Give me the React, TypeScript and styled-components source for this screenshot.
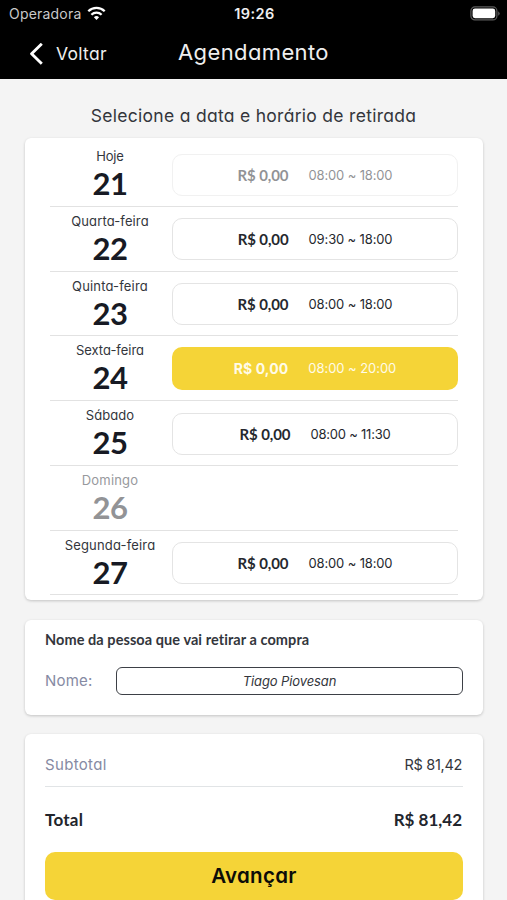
import React from "react";
import styled, { createGlobalStyle } from "styled-components";

const GlobalStyle = createGlobalStyle`
  *, *::before, *::after { box-sizing: border-box; }
  body {
    margin: 0;
    background: #f4f4f4;
    font-family: Inter, sans-serif;
    font-feature-settings: "cv11" 1;
    color: #33363c;
  }
`;

const Screen = styled.main`
  width: 507px;
  height: 900px;
  overflow: hidden;
  display: flex;
  flex-direction: column;
  background: #f4f4f4;
`;

const TopBar = styled.header`
  flex: none;
  height: 79px;
  background: #000;
  color: #efefef;
`;

const StatusBar = styled.div`
  display: grid;
  grid-template-columns: 1fr auto 1fr;
  align-items: center;
  height: 27px;
  padding: 0 7px 0 9px;
`;

const Carrier = styled.div`
  display: flex;
  align-items: center;
  gap: 6px;
  font-size: 14px;
  letter-spacing: 0.2px;
  color: #c9c9c9;
  font-feature-settings: "cv11" 0;
`;

const Clock = styled.div`
  font-size: 14.5px;
  font-weight: 600;
  letter-spacing: 0.4px;
`;

const BatteryIcon = styled.svg`
  justify-self: end;
`;

const NavBar = styled.nav`
  display: grid;
  grid-template-columns: 1fr auto 1fr;
  align-items: center;
  height: 52px;
  padding: 0 28px;
`;

const BackButton = styled.button`
  display: flex;
  align-items: center;
  gap: 12px;
  padding: 1px 0 0;
  border: 0;
  background: none;
  color: inherit;
  font: inherit;
  font-feature-settings: "cv11" 1;
  font-size: 17.5px;
  letter-spacing: 0.3px;
`;

const Title = styled.h1`
  margin: 0;
  padding-bottom: 3px;
  font-size: 22px;
  font-weight: 400;
  letter-spacing: 0.38px;
`;

const Heading = styled.h2`
  flex: none;
  margin: 0;
  padding-top: 15px;
  height: 59px;
  line-height: 43px;
  text-align: center;
  font-size: 17.5px;
  font-weight: 400;
  letter-spacing: 0.29px;
`;

const Card = styled.section`
  flex: none;
  margin: 0 24px 0 25px;
  border-radius: 6px;
  background: #fff;
  box-shadow: 0 1px 3px rgba(0, 0, 0, 0.2);
`;

const ScheduleCard = styled(Card)`
  height: 462px;
  padding: 4px 25px 0;
`;

const DayRow = styled.div`
  display: grid;
  grid-template-columns: 120px 286px;
  column-gap: 2px;
  height: 64.75px;
  border-bottom: 1px solid #e2e2e2;
`;

const DayLabel = styled.div<{ $muted?: boolean }>`
  display: flex;
  flex-direction: column;
  align-items: center;
  padding-top: 5px;
  color: ${(p) => (p.$muted ? "#97999d" : "#33363c")};
`;

const Weekday = styled.span<{ $tracking: number }>`
  font-size: 13px;
  line-height: 18px;
  letter-spacing: ${(p) => p.$tracking}px;
`;

const DayNumber = styled.span<{ $muted?: boolean }>`
  font-family: Lato, sans-serif;
  font-size: 31px;
  font-weight: 700;
  line-height: 36px;
  letter-spacing: -0.5px;
  color: ${(p) => (p.$muted ? "#929396" : "#171a24")};
`;

const Slot = styled.button<{ $state: "normal" | "disabled" | "selected" }>`
  display: flex;
  align-items: center;
  justify-content: center;
  gap: 20px;
  width: 286px;
  height: ${(p) => (p.$state === "selected" ? 43 : 42)}px;
  margin: ${(p) => (p.$state === "selected" ? 10.7 : 11.7)}px 0 0;
  padding: 0;
  border: ${(p) => (p.$state === "selected" ? "0" : "1px solid #e4e4e4")};
  border-radius: 10px;
  background: ${(p) => (p.$state === "selected" ? "#f5d437" : "#fff")};
  color: ${(p) => (p.$state === "selected" ? "#fffbe8" : "#25282e")};
  opacity: ${(p) => (p.$state === "disabled" ? 0.5 : 1)};
  font: inherit;
  font-feature-settings: "cv11" 1;
`;

const Price = styled.span<{ $selected: boolean }>`
  font-family: ${(p) => (p.$selected ? "Inter" : "Lato")}, sans-serif;
  font-size: ${(p) => (p.$selected ? 14 : 15)}px;
  font-weight: 700;
  letter-spacing: ${(p) => (p.$selected ? 0.1 : -0.1)}px;
`;

const Hours = styled.span<{ $tracking: number }>`
  font-size: 13px;
  letter-spacing: ${(p) => p.$tracking}px;
`;

const PickupCard = styled(Card)`
  height: 95px;
  margin-top: 20px;
  padding: 9px 20px 0;
`;

const PickupTitle = styled.h3`
  margin: 0;
  font-family: Lato, sans-serif;
  font-size: 14.5px;
  font-weight: 700;
  line-height: 21px;
  letter-spacing: 0.07px;
  font-variant-ligatures: none;
`;

const Field = styled.label`
  display: grid;
  grid-template-columns: 71px 1fr;
  align-items: center;
  height: 28px;
  margin-top: 17px;
`;

const Muted = styled.span<{ $tracking: number }>`
  padding-bottom: 1px;
  font-size: 15px;
  letter-spacing: ${(p) => p.$tracking}px;
  color: #868aa3;
`;

const NameInput = styled.input`
  width: 100%;
  height: 28px;
  padding: 0 0 1px;
  border: 1px solid #3d4046;
  border-radius: 6px;
  background: #fff;
  color: #33363c;
  text-align: center;
  font: italic 400 13px Inter, sans-serif;
  font-feature-settings: "cv11" 1;
  letter-spacing: -0.1px;
`;

const SummaryCard = styled(Card)`
  height: 190px;
  margin-top: 19px;
  padding: 10px 20px 0;
`;

const SummaryRow = styled.div`
  display: flex;
  align-items: center;
  justify-content: space-between;
  height: 43px;
  padding-right: 1px;
  border-bottom: 1px solid #e1e4e6;
`;

const Amount = styled.span`
  padding-bottom: 1px;
  font-size: 14.5px;
  letter-spacing: -0.3px;
`;

const TotalRow = styled.div`
  display: flex;
  align-items: center;
  justify-content: space-between;
  height: 65px;
  padding-right: 1px;
  font-family: Lato, sans-serif;
  font-size: 17px;
  font-weight: 700;
  color: #22252c;
`;

const TotalLabel = styled.span`
  letter-spacing: 0.25px;
`;

const NextButton = styled.button`
  display: block;
  width: 418px;
  height: 48px;
  padding: 0 0 1px;
  border: 0;
  border-radius: 10px;
  background: #f5d437;
  color: #0c0c08;
  font: 600 20.5px Inter, sans-serif;
  font-feature-settings: "cv11" 1;
  letter-spacing: 0.3px;
`;

type Day = {
  name: string;
  tracking: number;
  day: number;
  hours?: string;
  hoursTracking?: number;
  state?: "normal" | "disabled" | "selected";
};

const days: Day[] = [
  { name: "Hoje", tracking: -0.15, day: 21, hours: "08:00 ~ 18:00", state: "disabled" },
  { name: "Quarta-feira", tracking: 0.12, day: 22, hours: "09:30 ~ 18:00" },
  { name: "Quinta-feira", tracking: 0.17, day: 23, hours: "08:00 ~ 18:00" },
  { name: "Sexta-feira", tracking: -0.02, day: 24, hours: "08:00 ~ 20:00", hoursTracking: -0.05, state: "selected" },
  { name: "Sábado", tracking: 0.05, day: 25, hours: "08:00 ~ 11:30", hoursTracking: -0.22 },
  { name: "Domingo", tracking: 0.2, day: 26 },
  { name: "Segunda-feira", tracking: 0.16, day: 27, hours: "08:00 ~ 18:00" },
];

export default function App() {
  return (
    <Screen>
      <GlobalStyle />
      <TopBar>
        <StatusBar>
          <Carrier>
            Operadora
            <svg width="19" height="15" viewBox="0 0 19 15" fill="none" stroke="#fff" strokeWidth="2.3">
              <path d="M1.3 5.2a11.7 11.7 0 0 1 16.4 0" />
              <path d="M4.4 8.7a7.3 7.3 0 0 1 10.2 0" />
              <path d="M6.9 11.3a3.8 3.8 0 0 1 5.2 0L9.5 14Z" fill="#fff" stroke="none" />
            </svg>
          </Carrier>
          <Clock>19:26</Clock>
          <BatteryIcon width="30" height="15" viewBox="0 0 30 15">
            <rect x="0.9" y="0.9" width="26" height="13" rx="4" fill="none" stroke="#5c5c5c" strokeWidth="1.2" />
            <rect x="2.6" y="2.6" width="22.6" height="9.6" rx="2.4" fill="#fff" />
            <path d="M28.2 5.2q3 2.3 0 4.6Z" fill="#5c5c5c" />
          </BatteryIcon>
        </StatusBar>
        <NavBar>
          <BackButton>
            <svg width="16" height="22" viewBox="0 0 16 22" fill="none" stroke="#fff" strokeWidth="2.9" strokeLinejoin="round">
              <path d="M13.8 0.8 3.6 10.8 13.8 20.8" />
            </svg>
            Voltar
          </BackButton>
          <Title>Agendamento</Title>
        </NavBar>
      </TopBar>

      <Heading>Selecione a data e horário de retirada</Heading>

      <ScheduleCard>
        {days.map((d) => {
          const state = d.state ?? "normal";
          return (
            <DayRow key={d.day}>
              <DayLabel $muted={!d.hours}>
                <Weekday $tracking={d.tracking}>{d.name}</Weekday>
                <DayNumber $muted={!d.hours}>{d.day}</DayNumber>
              </DayLabel>
              {d.hours && (
                <Slot $state={state}>
                  <Price $selected={state === "selected"}>R$ 0,00</Price>
                  <Hours $tracking={d.hoursTracking ?? -0.14}>{d.hours}</Hours>
                </Slot>
              )}
            </DayRow>
          );
        })}
      </ScheduleCard>

      <PickupCard>
        <PickupTitle>Nome da pessoa que vai retirar a compra</PickupTitle>
        <Field>
          <Muted $tracking={0.2}>Nome:</Muted>
          <NameInput defaultValue="Tiago Piovesan" />
        </Field>
      </PickupCard>

      <SummaryCard>
        <SummaryRow>
          <Muted $tracking={0.33}>Subtotal</Muted>
          <Amount>R$ 81,42</Amount>
        </SummaryRow>
        <TotalRow>
          <TotalLabel>Total</TotalLabel>
          <span>R$ 81,42</span>
        </TotalRow>
        <NextButton>Avançar</NextButton>
      </SummaryCard>
    </Screen>
  );
}
